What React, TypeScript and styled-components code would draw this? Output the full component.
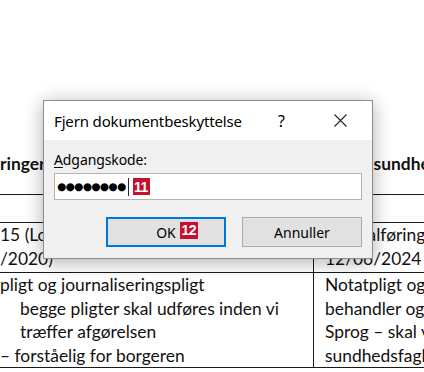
import React from 'react';
import styled, { createGlobalStyle } from 'styled-components';

const GlobalStyle = createGlobalStyle`
  html, body {
    margin: 0;
    padding: 0;
    background: #ffffff;
    overflow: hidden;
  }
`;

const Page = styled.div`
  position: relative;
  width: 424px;
  height: 372px;
  overflow: hidden;
  background: #ffffff;
  font-family: Lato, 'Liberation Sans', sans-serif;
  color: #111;
`;

// the word document behind the dialog
const Doc = styled.div`
  padding-top: 150px;
  font-size: 17.4px;
  line-height: 23.5px;
  white-space: nowrap;
`;

const Row = styled.div<{ $h: number; $bold?: boolean }>`
  display: grid;
  grid-template-columns: 313px 1fr;
  height: ${({ $h }) => $h}px;
  border-bottom: 1px solid #1a1a1a;
  font-weight: ${({ $bold }) => ($bold ? 700 : 400)};
  padding-top: ${({ $bold }) => ($bold ? 2 : 0)}px;
`;

const LeftCell = styled.div`
  overflow: hidden;
`;

const RightCell = styled.div`
  border-left: 1px solid #1a1a1a;
  padding-left: 11px;
  overflow: hidden;
`;

const Indent = styled.div`
  padding-left: 20px;
`;

// dialog
const Dialog = styled.div`
  position: absolute;
  left: 43px;
  top: 100px;
  width: 328px;
  height: 157px;
  border: 1px solid #8c8c8c;
  background: #f0f0f0;
  box-shadow: 0 3px 18px rgba(0, 0, 0, 0.32);
  font-family: 'Noto Sans', 'Open Sans', sans-serif;
  color: #000;
  display: flex;
  flex-direction: column;
`;

const TitleBar = styled.div`
  height: 39px;
  background: #ffffff;
  display: flex;
  align-items: center;
  padding: 0 25px 0 10px;
`;

const Title = styled.div`
  font-size: 15px;
  line-height: 20px;
  flex: 1;
  letter-spacing: -0.15px;
`;

const Help = styled.span`
  font-size: 16px;
  line-height: 20px;
  margin-right: 49px;
`;

const Body = styled.div`
  flex: 1;
  padding: 10px 10px 0 10px;
  display: flex;
  flex-direction: column;
`;

const Label = styled.div`
  font-size: 14px;
  line-height: 19px;
  letter-spacing: -0.1px;
  u {
    text-decoration: underline;
    text-underline-offset: 2px;
  }
`;

const Field = styled.div`
  margin-top: 4px;
  height: 25px;
  border: 1px solid #b4b4b4;
  background: #ffffff;
  display: flex;
  align-items: center;
  padding-left: 2px;
`;

const Dots = styled.span`
  font-family: 'DejaVu Sans', sans-serif;
  font-size: 10.5px;
  letter-spacing: -0.6px;
  line-height: 1;
  color: #000;
`;

const Caret = styled.span`
  width: 1px;
  height: 18px;
  background: #2b2b2b;
  margin-left: 2px;
`;

const Badge = styled.span`
  display: inline-flex;
  align-items: center;
  justify-content: center;
  min-width: 17px;
  height: 17px;
  background: #c8102e;
  color: #ffffff;
  font-family: 'Liberation Sans', Arial, sans-serif;
  font-weight: 700;
  font-size: 14px;
  letter-spacing: -0.5px;
  line-height: 1;
`;

const FieldBadge = styled(Badge)`
  margin-left: 4px;
`;

const Buttons = styled.div`
  margin-top: 17px;
  display: flex;
  justify-content: flex-end;
  gap: 16px;
`;

const Button = styled.div<{ $primary?: boolean }>`
  width: 120px;
  height: 30px;
  box-sizing: border-box;
  background: #e1e1e1;
  border: ${({ $primary }) => ($primary ? '2px solid #0078d7' : '1px solid #adadad')};
  display: flex;
  align-items: center;
  justify-content: center;
  font-size: 14px;
`;

const ButtonText = styled.span`
  position: relative;
`;

const ButtonBadge = styled(Badge)`
  position: absolute;
  left: calc(100% + 4px);
  top: -1px;
  width: 18px;
`;

const CloseIcon = () => (
  <svg width="13" height="13" viewBox="0 0 13 13">
    <path d="M0.5 0.5 L12.5 12.5 M12.5 0.5 L0.5 12.5" stroke="#222" strokeWidth="1.1" fill="none" />
  </svg>
);

export default function App() {
  return (
    <Page>
      <GlobalStyle />
      <Doc>
        <Row $h={42} $bold>
          <LeftCell>ringer</LeftCell>
          <RightCell>Krav i sundhedsloven</RightCell>
        </Row>
        <Row $h={27}>
          <LeftCell />
          <RightCell />
        </Row>
        <Row $h={49}>
          <LeftCell>
            15 (Lov nr. 1234)
            <br />
            /2020)
          </LeftCell>
          <RightCell>
            Journalføring
            <br />
            12/06/2024
          </RightCell>
        </Row>
        <Row $h={94}>
          <LeftCell>
            pligt og journaliseringspligt
            <Indent>begge pligter skal udføres inden vi</Indent>
            <Indent>træffer afgørelsen</Indent>– forståelig for borgeren
          </LeftCell>
          <RightCell>
            Notatpligt og journalføring
            <br />
            behandler og patient
            <br />
            Sprog – skal være forståeligt
            <br />
            sundhedsfagligt personale
          </RightCell>
        </Row>
      </Doc>

      <Dialog>
        <TitleBar>
          <Title>Fjern dokumentbeskyttelse</Title>
          <Help>?</Help>
          <CloseIcon />
        </TitleBar>
        <Body>
          <Label>
            <u>A</u>dgangskode:
          </Label>
          <Field>
            <Dots>●●●●●●●●</Dots>
            <Caret />
            <FieldBadge>11</FieldBadge>
          </Field>
          <Buttons>
            <Button $primary>
              <ButtonText>
                OK
                <ButtonBadge>12</ButtonBadge>
              </ButtonText>
            </Button>
            <Button>Annuller</Button>
          </Buttons>
        </Body>
      </Dialog>
    </Page>
  );
}
